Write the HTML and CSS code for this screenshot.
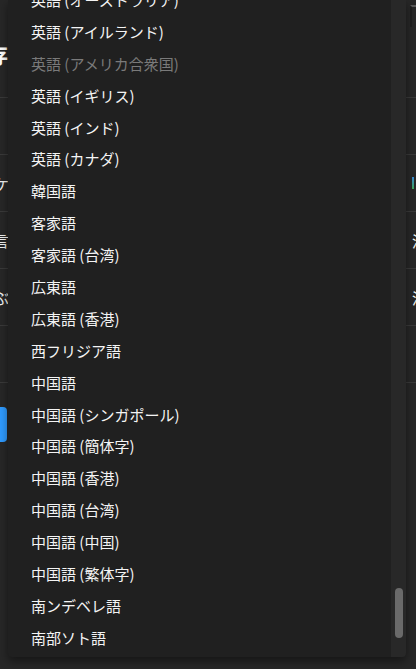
FILE: index.html
```html
<!DOCTYPE html>
<html lang="ja">
<head>
  <meta charset="UTF-8" />
  <meta name="viewport" content="width=device-width, initial-scale=1.0"/>
  <title>言語の設定</title>
  <link rel="stylesheet" href="styles.css">
</head>
<body>

  <!-- Page behind the menu -->
  <div class="page">
    <div class="page-head">
      <h1 class="title">保存</h1>
      <div class="search-box"></div>
    </div>
    <div class="row"><span class="label"></span><span class="value muted">ト</span></div>
    <div class="row"><span class="label">ケ</span><span class="value"><i class="bar"></i></span></div>
    <div class="row"><span class="label">言</span><span class="value">済</span></div>
    <div class="row"><span class="label">ぶ</span><span class="value">済</span></div>
    <div class="row"><span class="label"></span><span class="value"></span></div>
    <div class="actions"><button class="primary">追加</button></div>
  </div>

  <!-- Language dropdown -->
  <div class="dropdown">
    <ul class="options">
      <li>英語 (オーストラリア)</li>
      <li>英語 (アイルランド)</li>
      <li class="disabled">英語 (アメリカ合衆国)</li>
      <li>英語 (イギリス)</li>
      <li>英語 (インド)</li>
      <li>英語 (カナダ)</li>
      <li>韓国語</li>
      <li>客家語</li>
      <li>客家語 (台湾)</li>
      <li>広東語</li>
      <li>広東語 (香港)</li>
      <li>西フリジア語</li>
      <li>中国語</li>
      <li>中国語 (シンガポール)</li>
      <li>中国語 (簡体字)</li>
      <li>中国語 (香港)</li>
      <li>中国語 (台湾)</li>
      <li>中国語 (中国)</li>
      <li>中国語 (繁体字)</li>
      <li>南ンデベレ語</li>
      <li>南部ソト語</li>
      <li>南アフリカ英語</li>
    </ul>
    <div class="track"><div class="thumb"></div></div>
  </div>

</body>
</html>
```

FILE: styles.css
```css
* {
  box-sizing: border-box;
  margin: 0;
  padding: 0;
  font-family: 'Noto Sans CJK JP', 'Noto Sans', sans-serif;
}

body {
  background: #272727;
  width: 416px;
  height: 669px;
  overflow: hidden;
  position: relative;
  color: #f2f2f2;
}

/* page underneath */
.page {
  width: 460px;
  margin-left: -20px;
}

.page-head {
  height: 98px;
  display: flex;
  justify-content: space-between;
  border-bottom: 1px solid #3a3a3a;
}

.title {
  font-size: 22px;
  font-weight: 700;
  color: #fff;
  margin-top: 38px;
  margin-left: -16px;
  line-height: 30px;
}

.search-box {
  width: 30px;
  height: 22px;
  margin-top: 5px;
  border-top: 2px solid #5a5a5a;
  border-left: 2px solid #1f1f1f;
}

.row {
  height: 57px;
  display: flex;
  justify-content: space-between;
  align-items: center;
  border-bottom: 1px solid #3a3a3a;
  font-size: 15px;
}

.row:first-of-type {
  height: 49px;
}

.label {
  margin-left: 14px;
}

.value {
  width: 28px;
  color: #f2f2f2;
}

.value.muted {
  color: #8a8a8a;
}

.bar {
  display: block;
  width: 2px;
  height: 12px;
  background: linear-gradient(#3a8ad6, #3fa65a);
}

.actions {
  padding-top: 24px;
}

.primary {
  width: 90px;
  height: 35px;
  border: none;
  border-radius: 4px;
  background: #2f9bff;
  color: #fff;
  margin-left: -63px;
}

/* dropdown menu */
.dropdown {
  position: absolute;
  left: 8px;
  top: 0;
  width: 398px;
  height: 657px;
  background: #202020;
  display: flex;
  box-shadow: 0 4px 10px rgba(0, 0, 0, 0.45);
  border-radius: 0 0 4px 4px;
  overflow: hidden;
}

.options {
  flex: 1;
  list-style: none;
  margin-top: -16px;
}

.options li {
  height: 31.9px;
  line-height: 31.9px;
  padding-left: 23px;
  font-size: 15px;
  color: #f4f4f4;
  white-space: nowrap;
}

.options li.disabled {
  color: #7a7a7a;
}

.track {
  width: 15px;
  background: #282828;
  position: relative;
}

.thumb {
  position: absolute;
  left: 4px;
  top: 588px;
  width: 8px;
  height: 50px;
  border-radius: 4px;
  background: #6a6a6a;
}
```
